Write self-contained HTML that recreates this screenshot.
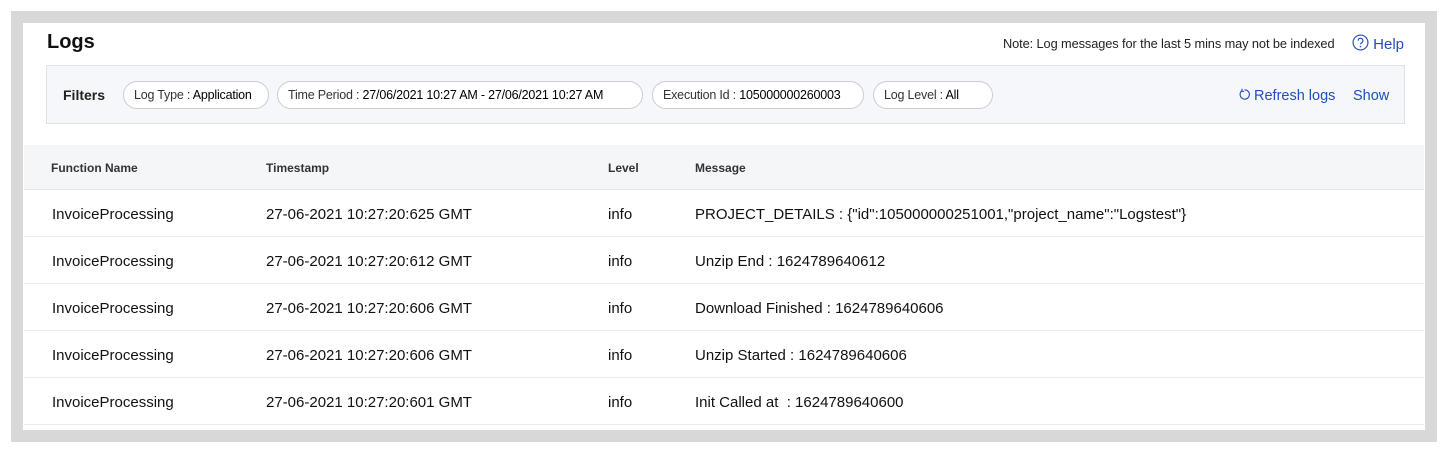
<!DOCTYPE html>
<html><head><meta charset="utf-8"><style>
*{margin:0;padding:0;box-sizing:border-box}
body{width:1448px;height:453px;background:#fff;font-family:"Liberation Sans",sans-serif;color:#1a1a1a;position:relative;overflow:hidden}
.frame{position:absolute;left:11px;top:11px;width:1426px;height:431px;background:#d8d8d8}
.card{position:absolute;left:23px;top:23px;width:1402px;height:407px;background:#fff}
.abs{position:absolute;white-space:nowrap}
.filt{position:absolute;left:46px;top:65px;width:1359px;height:59px;background:#f5f7fa;border:1px solid #dde2e8}
.pill{position:absolute;top:81px;height:28px;border:1px solid #c9ccd1;border-radius:14px;background:#fff;font-size:12.5px;line-height:26px;padding-left:10px;color:#333;white-space:nowrap;letter-spacing:-0.2px}
.pill b{font-weight:normal;color:#000}
.hdr{position:absolute;left:24px;top:145px;width:1400px;height:45px;background:#f5f6f8;border-bottom:1px solid #e3e6ea}
.th{position:absolute;top:161px;font-size:12px;font-weight:bold;color:#333}
.row{position:absolute;left:24px;width:1400px;height:47px;border-bottom:1px solid #e8eaed}
.td{position:absolute;font-size:15px;color:#111;white-space:nowrap}
.blue{color:#1f4fb8}
</style></head><body>
<div class="frame"></div>
<div class="card"></div>
<div class="abs" style="left:47px;top:31px;font-size:20px;font-weight:bold;color:#111">Logs</div>
<div class="abs" style="left:1003px;top:36px;font-size:12.8px;color:#222;letter-spacing:-0.1px">Note: Log messages for the last 5 mins may not be indexed</div>
<div class="abs blue" style="left:1352px;top:34px;font-size:15px"><svg width="17" height="17" viewBox="0 0 16 16" style="vertical-align:-2px"><circle cx="8" cy="8" r="7" fill="none" stroke="#1f4fb8" stroke-width="1.1"/><path d="M5.8 6.2a2.2 2.2 0 1 1 3.2 2c-.7.4-1 .8-1 1.5" fill="none" stroke="#1f4fb8" stroke-width="1.1"/><circle cx="8" cy="11.8" r=".8" fill="#1f4fb8"/></svg> Help</div>
<div class="filt"></div>
<div class="abs" style="left:63px;top:87px;font-size:14px;font-weight:bold;color:#222">Filters</div>
<div class="pill" style="left:123px;width:146px">Log Type : <b>Application</b></div>
<div class="pill" style="left:277px;width:366px">Time Period : <b>27/06/2021 10:27 AM - 27/06/2021 10:27 AM</b></div>
<div class="pill" style="left:652px;width:212px">Execution Id : <b>105000000260003</b></div>
<div class="pill" style="left:873px;width:120px">Log Level : <b>All</b></div>
<div class="abs blue" style="left:1238px;top:88px;font-size:14.5px"><svg width="13" height="13" viewBox="0 0 14 14" style="vertical-align:-1px;margin-right:3px"><path d="M4 3.2A5 5 0 1 0 7 2" fill="none" stroke="#1f4fb8" stroke-width="1.2"/><path d="M4.5 0.8L4 3.4L6.6 3.8" fill="none" stroke="#1f4fb8" stroke-width="1.2"/></svg>Refresh logs</div>
<div class="abs blue" style="left:1353px;top:88px;font-size:14.5px">Show</div>
<div class="hdr"></div>
<div class="th" style="left:51px">Function Name</div>
<div class="th" style="left:266px">Timestamp</div>
<div class="th" style="left:608px">Level</div>
<div class="th" style="left:695px">Message</div>
<div class="row" style="top:190px"></div>
<div class="row" style="top:237px"></div>
<div class="row" style="top:284px"></div>
<div class="row" style="top:331px"></div>
<div class="row" style="top:378px"></div>
<div class="td" style="left:52px;top:206px">InvoiceProcessing</div><div class="td" style="left:266px;top:206px">27-06-2021 10:27:20:625 GMT</div><div class="td" style="left:608px;top:206px">info</div><div class="td" style="left:695px;top:206px">PROJECT_DETAILS : {"id":105000000251001,"project_name":"Logstest"}</div>
<div class="td" style="left:52px;top:253px">InvoiceProcessing</div><div class="td" style="left:266px;top:253px">27-06-2021 10:27:20:612 GMT</div><div class="td" style="left:608px;top:253px">info</div><div class="td" style="left:695px;top:253px">Unzip End : 1624789640612</div>
<div class="td" style="left:52px;top:300px">InvoiceProcessing</div><div class="td" style="left:266px;top:300px">27-06-2021 10:27:20:606 GMT</div><div class="td" style="left:608px;top:300px">info</div><div class="td" style="left:695px;top:300px">Download Finished : 1624789640606</div>
<div class="td" style="left:52px;top:347px">InvoiceProcessing</div><div class="td" style="left:266px;top:347px">27-06-2021 10:27:20:606 GMT</div><div class="td" style="left:608px;top:347px">info</div><div class="td" style="left:695px;top:347px">Unzip Started : 1624789640606</div>
<div class="td" style="left:52px;top:394px">InvoiceProcessing</div><div class="td" style="left:266px;top:394px">27-06-2021 10:27:20:601 GMT</div><div class="td" style="left:608px;top:394px">info</div><div class="td" style="left:695px;top:394px">Init Called at&nbsp; : 1624789640600</div>
</body></html>
